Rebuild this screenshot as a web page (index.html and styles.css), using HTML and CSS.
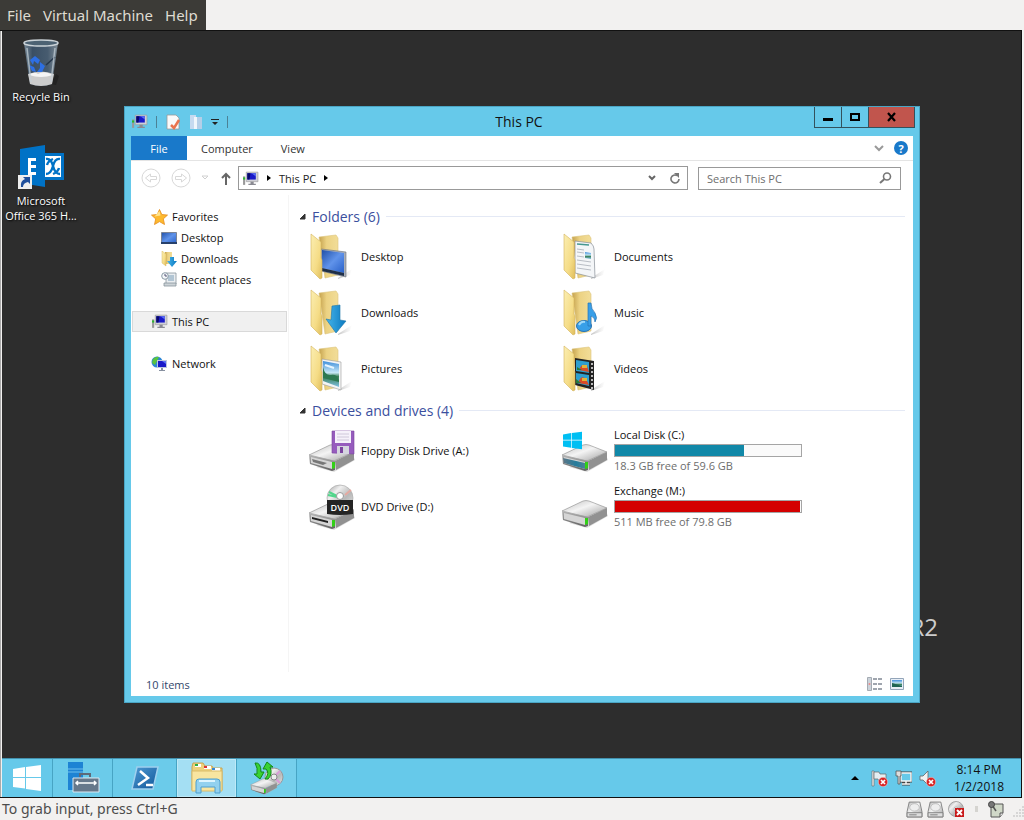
FILE: index.html
```html
<!DOCTYPE html>
<html lang="en">
<head>
<meta charset="utf-8">
<title>Virtual Machine</title>
<link rel="stylesheet" href="styles.css">
</head>
<body>
<svg class="defs" aria-hidden="true">
  <defs>
    <linearGradient id="gFront" x1="0" y1="0" x2="1" y2="1"><stop offset="0" stop-color="#fbeeb2"/><stop offset=".6" stop-color="#f5dc86"/><stop offset="1" stop-color="#dfbd5c"/></linearGradient>
    <linearGradient id="gBack" x1="0" y1="0" x2="1" y2="0"><stop offset="0" stop-color="#c5a24e"/><stop offset=".4" stop-color="#ecd283"/><stop offset="1" stop-color="#f2dd98"/></linearGradient>
    <linearGradient id="gShade"><stop offset="0" stop-color="#888" stop-opacity=".5"/><stop offset="1" stop-color="#aaa" stop-opacity="0"/></linearGradient>
    <linearGradient id="gScreen" x1="0" y1="0" x2="1" y2="1"><stop offset="0" stop-color="#2050a8"/><stop offset=".5" stop-color="#6093ea"/><stop offset="1" stop-color="#2860c8"/></linearGradient>
    <linearGradient id="gArrow" x1="0" x2="1"><stop offset="0" stop-color="#46b5ea"/><stop offset="1" stop-color="#0a78c0"/></linearGradient>
    <linearGradient id="gTop" x1="0" x2="1" y1="0" y2="1"><stop offset="0" stop-color="#bbb"/><stop offset=".45" stop-color="#f4f4f4"/><stop offset="1" stop-color="#9d9d9d"/></linearGradient>
    <linearGradient id="gSide" x1="0" x2="0" y1="0" y2="1"><stop offset="0" stop-color="#b5b5b5"/><stop offset="1" stop-color="#606060"/></linearGradient>
    <linearGradient id="gTeal" x1="0" x2="1"><stop offset="0" stop-color="#5d7686"/><stop offset=".6" stop-color="#247c9c"/><stop offset="1" stop-color="#4d8295"/></linearGradient>
    <linearGradient id="gDisc" x1="0" x2="1" y1="0" y2="1"><stop offset="0" stop-color="#999"/><stop offset=".3" stop-color="#f0f0f0"/><stop offset=".6" stop-color="#b8b8b8"/><stop offset="1" stop-color="#e8e8e8"/></linearGradient>
    <linearGradient id="gShell" x1="0" x2="1" y1="0" y2="1"><stop offset="0" stop-color="#4f9bd4"/><stop offset="1" stop-color="#0f5598"/></linearGradient>
    <linearGradient id="gBin" x1="0" x2="1"><stop offset="0" stop-color="#8195a5"/><stop offset=".25" stop-color="#3c536a"/><stop offset=".7" stop-color="#4a6177"/><stop offset="1" stop-color="#8a98a3"/></linearGradient>
    <linearGradient id="gPic" x1="0" x2="0" y1="0" y2="1"><stop offset="0" stop-color="#3f8edb"/><stop offset=".45" stop-color="#c6e7f5"/><stop offset=".6" stop-color="#397e52"/><stop offset="1" stop-color="#7fc0e4"/></linearGradient>
    <symbol id="pc" viewBox="0 0 16 14"><path d="M1 5h2v8H1z" fill="#999"/><path d="M1 6h2v2H1z" fill="#2eb82e"/><path d="M4 1h11v9H4z" fill="#d0d0d8" stroke="#999" stroke-width=".6"/><path d="M5 2h8v6H5z" fill="#1a1ac8"/><path d="M5 2h3L7 8H5z" fill="#08086a"/><path d="M9 2h4v3z" fill="#5b70f5"/><path d="M8 10h3v2h2v1H6v-1h2z" fill="#8a8a92"/></symbol>
    <symbol id="folder" viewBox="0 0 48 48"><path d="M28 46l14-9-2 6-12 4z" fill="url(#gShade)"/><path d="M9 5l17-2 2 3v37l-13 3z" fill="url(#gBack)" stroke="#dcc47c" stroke-width=".6"/></symbol>
    <symbol id="flap" viewBox="0 0 48 48"><path d="M1 2l10 8v16l1 2v18l-2 1-9-9z" fill="url(#gFront)" stroke="#d3b45c" stroke-width=".6"/></symbol>
    <symbol id="drive" viewBox="0 0 48 30"><path d="M8 25l18 5 21-12-2-5z" fill="#bbb" opacity=".5"/><path d="M1 13L22 3q3-1 6 0l18 7-20 9z" fill="url(#gTop)" stroke="#8a8a8a" stroke-width=".6"/><path d="M1 13l26 6v9l-3 1-22-7z" fill="url(#gSide)"/><path d="M27 19l19-9v8l-18 10z" fill="#919191"/><path d="M3 15l21 5v7L3 21z" fill="#d5d5d5"/><path d="M24 20h3v6l-3 1z" fill="#32cf17"/></symbol>
    <symbol id="badge" viewBox="0 0 10 10"><circle cx="5" cy="5" r="4.700" fill="#d92626" stroke="#fff" stroke-width=".4"/><path d="M3 3l4 4M7 3L3 7" stroke="#fff" stroke-width="1.700"/></symbol>
    <symbol id="disk" viewBox="0 0 16 16"><path d="M3 1h10l2 9v5H1v-5z" fill="url(#gTop)" stroke="#777" stroke-width=".8"/><path d="M1 11h14v4H1z" fill="#ddd" stroke="#777" stroke-width=".8"/><ellipse cx="8" cy="6" rx="4.500" ry="3.500" fill="#eee" stroke="#aaa" stroke-width=".6"/><path d="M3 13h7" stroke="#888"/></symbol>
    <symbol id="winlogo" viewBox="0 0 28 26"><path d="M0 4l12-2v10H0zM13 2l15-2v12H13zM0 13h12v10.500L0 22zM13 13h15v13l-15-2z"/></symbol>
  </defs>
</svg>

<nav class="menubar">
  <div class="menus"><button>File</button><button>Virtual Machine</button><button>Help</button></div>
</nav>

<main class="screen">
  <div class="desktop">
    <div class="shortcuts">
      <a class="shortcut" href="#">
        <svg width="48" height="50" viewBox="0 0 48 50"><path d="M34 46l5-10 3 2-3 9z" fill="#222"/><path d="M7 5h34l-6 41q-11 4-22 0z" fill="url(#gBin)" opacity=".9"/><path d="M11 36q13-5 26 0l-2 10q-11 4-22 0z" fill="#ccc"/><path d="M12 37q5-4 9-1 6-4 15 1-12 4-24 0z" fill="#f5f5f5"/><path d="M13 22l5-4 5 4-2 4-4-3-1 4z M23 24l5 4-3 6h-5l3-4z M12 27l5 2 2 5-4-1z" fill="#2d6fe4"/><path d="M38 19l-9 8" stroke="#24364a" stroke-width="1.500"/><path d="M10 10l4 34M38 10l-4 34" stroke="#c5d0d8" stroke-width="1.500" opacity=".7"/><ellipse cx="24" cy="5" rx="17" ry="3" fill="#4c6273" stroke="#cbd3d8" stroke-width="1.500"/></svg>
        <span>Recycle Bin</span>
      </a>
      <a class="shortcut" href="#">
        <svg width="48" height="50" viewBox="0 0 48 50"><path d="M24 11h23v27H24z" fill="#0072c6"/><path d="M27 14h17v21H27z" fill="#fff"/><path d="M29 17q5-1 7 7 2 8 7 8M43 17q-5-1-7 7-2 8-7 8M30 23q1-4 6-6M42 26q-1 4-6 6" fill="none" stroke="#0072c6" stroke-width="2.400"/><path d="M3 7l25-4v42L3 41z" fill="#0072c6"/><path d="M11 16h8v3h-5v4h5v3h-5v4h5v3h-8z" fill="#fff"/><path d="M1 33h14v14H1z" fill="#eee"/><path d="M4 45q-1-6 4-8l-2-2h7v7l-2-2q-5 1-5 5z" fill="#1f4f9c"/></svg>
        <span>Microsoft<br>Office 365 H...</span>
      </a>
    </div>

    <div class="brand">R2</div>

    <section class="window">
      <header class="titlebar">
        <div class="quick">
          <svg width="17" height="15"><use href="#pc"/></svg>
          <i class="bar"></i>
          <button aria-label="Properties"><svg width="16" height="16" viewBox="0 0 16 16"><path d="M2 1h9l3 3v11H2z" fill="#fafafa" stroke="#999" stroke-width=".8"/><path d="M6 11l3 3 5-8" fill="none" stroke="#ea744e" stroke-width="2.500"/></svg></button>
          <button aria-label="New folder"><svg width="14" height="16" viewBox="0 0 14 16"><path d="M1 1h6v14H1z" fill="#c5daf0"/><path d="M7 3h6v12H7z" fill="#b4cfe8"/><path d="M5 3h3v12H5z" fill="#eff6fc"/></svg></button>
          <button aria-label="Customize"><svg width="8" height="8" viewBox="0 0 8 8"><path d="M0 1h8v1H0zM1 4h6L4 7z" fill="#222"/></svg></button>
          <i class="bar"></i>
        </div>
        <h1>This PC</h1>
        <div class="controls">
          <button aria-label="Minimize"><svg width="12" height="12"><path d="M1 7h10v3H1z"/></svg></button>
          <button aria-label="Maximize"><svg width="12" height="12"><path d="M2 3h8v6H2z" fill="none" stroke="#000" stroke-width="2"/></svg></button>
          <button class="close" aria-label="Close"><svg width="12" height="12"><path d="M2 2l7 8M9 2L2 10" stroke="#000" stroke-width="2.200"/></svg></button>
        </div>
      </header>

      <div class="client">
        <nav class="tabs">
          <button class="file">File</button><button>Computer</button><button>View</button>
          <div class="tabs-end">
            <button aria-label="Expand the ribbon"><svg width="10" height="8"><path d="M1 2l4 4 4-4" fill="none" stroke="#999" stroke-width="2"/></svg></button>
            <button class="help" aria-label="Help">?</button>
          </div>
        </nav>

        <div class="address-row">
          <button aria-label="Back"><svg width="20" height="20" viewBox="0 0 20 20" fill="none" stroke="#d8d8d8"><circle cx="10" cy="10" r="9"/><path d="M4.500 10l5-4v2.500h6v3h-6V14z"/></svg></button>
          <button aria-label="Forward"><svg width="20" height="20" viewBox="0 0 20 20" fill="none" stroke="#d8d8d8"><circle cx="10" cy="10" r="9"/><path d="M15.500 10l-5-4v2.500h-6v3h6V14z"/></svg></button>
          <button aria-label="Recent locations"><svg width="8" height="6"><path d="M1 1h6L4 4z" fill="none" stroke="#d0d0d0"/></svg></button>
          <button class="up" aria-label="Up"><svg width="10" height="13"><path d="M5 13V2M1 6l4-4 4 4" fill="none" stroke="#666" stroke-width="2"/></svg></button>
          <div class="address">
            <svg width="17" height="15"><use href="#pc"/></svg>
            <svg width="4" height="8"><path d="M0 1l4 3-4 3z"/></svg>
            <span>This PC</span>
            <svg width="4" height="8"><path d="M0 1l4 3-4 3z"/></svg>
            <div class="address-end">
              <button aria-label="Previous locations"><svg width="10" height="8"><path d="M2 2l3 3 3-3" fill="none" stroke="#666" stroke-width="2"/></svg></button>
              <button aria-label="Refresh"><svg width="12" height="12"><path d="M8 3.500a4 4 0 1 0 2 3.500" fill="none" stroke="#777" stroke-width="1.600"/><path d="M5 1h5v5z" fill="#777"/></svg></button>
            </div>
          </div>
          <label class="search">
            <input type="text" placeholder="Search This PC" aria-label="Search This PC">
            <svg width="13" height="12"><circle cx="8" cy="4.500" r="3.500" fill="none" stroke="#777" stroke-width="1.600"/><path d="M5.500 7L1 11" stroke="#777" stroke-width="2"/></svg>
          </label>
        </div>

        <div class="body">
          <aside class="sidebar">
            <a href="#"><svg width="17" height="16" viewBox="0 0 17 16"><path d="M8.500 0.500l2.300 5 5.700.6-4.200 3.800 1.200 5.600-5-2.900-5 2.900 1.200-5.600L.5 6.100l5.700-.6z" fill="#fdb92e" stroke="#e58b1c" stroke-width=".8"/><path d="M8.500 2l1 4.500-6 1z" fill="#ffe38c"/></svg>Favorites</a>
            <a class="sub" href="#"><svg width="16" height="14" viewBox="0 0 16 14"><path d="M.5 1.500h15v11H.5z" fill="url(#gScreen)" stroke="#7c8494"/><path d="M0 11h16v2H0z" fill="#27406b"/></svg>Desktop</a>
            <a class="sub" href="#"><svg width="16" height="16" viewBox="0 0 16 16"><path d="M4 1h7v12H4z" fill="url(#gBack)"/><path d="M1 0l4 3v12l-4-3z" fill="url(#gFront)" stroke="#d9bb62" stroke-width=".5"/><path d="M9 6h4v4h3l-5 6-5-6h3z" fill="url(#gArrow)"/></svg>Downloads</a>
            <a class="sub" href="#"><svg width="16" height="15" viewBox="0 0 16 15"><path d="M5 1h10v11H5z" fill="#e9edf0" stroke="#88949c" stroke-width=".8"/><path d="M7 4h6M7 6h6M7 8h6" stroke="#7a9db7"/><path d="M3 11h12v3H3z" fill="#ccd3d7" stroke="#88949c" stroke-width=".8"/><circle cx="4" cy="4" r="3.300" fill="#f5f8fa" stroke="#8a9aa5"/><path d="M4 2v2h2" fill="none" stroke="#557"/></svg>Recent places</a>
            <a class="apart selected" href="#"><svg width="17" height="15"><use href="#pc"/></svg>This PC</a>
            <a class="apart" href="#"><svg width="17" height="16" viewBox="0 0 17 16"><circle cx="6" cy="6" r="5.500" fill="#2c86d6"/><path d="M2 3q3-3 6-2L6 5 4 9 1 7z" fill="#5ac43e"/><path d="M6 4h10v8H6z" fill="#bcc6dc"/><path d="M7 5h8v6H7z" fill="#1919c8"/><path d="M11 5h4v3z" fill="#5b70f5"/><path d="M10 12h2v2h2v1H8v-1h2z" fill="#8790a0"/></svg>Network</a>
          </aside>

          <div class="content">
            <section>
              <h2><svg width="7" height="7"><path d="M6 1v5H1z" fill="#333" stroke="#333"/></svg>Folders (6)</h2>
              <div class="grid">
                <a class="item" href="#"><svg width="48" height="48" viewBox="-2 0 48 48"><use href="#folder" width="48" height="48"/><path d="M11 17l25 3v25l-25-6z" fill="#a9afb8" stroke="#6b7078" stroke-width=".6"/><path d="M12 18l22 3v20l-22-5z" fill="url(#gScreen)"/><path d="M12 36l22 5v3l-22-5z" fill="#1f2f48"/><use href="#flap" width="48" height="48"/></svg><span>Desktop</span></a>
                <a class="item" href="#"><svg width="48" height="48" viewBox="-2 0 48 48"><use href="#folder" width="48" height="48"/><path d="M12 9l16 2q3 3 3 6l1 29-20-5z" fill="#f4f6f8" stroke="#868e96" stroke-width=".7"/><path d="M14 12l12 1" stroke="#479890" stroke-width="1.500"/><path d="M14 17l7 1M14 20l7 1M14 24l7 1M14 28l14 2M14 32l14 2M14 36l14 2" stroke="#b9bec5"/><path d="M22 20l6 1v6l-6-1z" fill="url(#gPic)"/><use href="#flap" width="48" height="48"/></svg><span>Documents</span></a>
                <a class="item" href="#"><svg width="48" height="48" viewBox="-2 0 48 48"><use href="#folder" width="48" height="48"/><path d="M22 18l8-1v15l6 1-10 12-10-14 5 1z" fill="url(#gArrow)" stroke="#1d76aa" stroke-width=".6"/><use href="#flap" width="48" height="48"/></svg><span>Downloads</span></a>
                <a class="item" href="#"><svg width="48" height="48" viewBox="-2 0 48 48"><use href="#folder" width="48" height="48"/><ellipse cx="21" cy="38" rx="7.500" ry="5.500" fill="#389fe8" stroke="#2773b4"/><path d="M25 15h3q0 6 4 10 3 5 0 9 0-5-4-6v10h-3z" fill="#389fe8" stroke="#2773b4" stroke-width=".7"/><path d="M16 37q2-4 6-3" fill="none" stroke="#9cd8fb" stroke-width="2"/><use href="#flap" width="48" height="48"/></svg><span>Music</span></a>
                <a class="item" href="#"><svg width="48" height="48" viewBox="-2 0 48 48"><use href="#folder" width="48" height="48"/><path d="M12 15l19 3v28l-19-6z" fill="#f4f4f4" stroke="#9a9a9a" stroke-width=".6"/><path d="M13 17l16 3v23l-16-6z" fill="url(#gPic)"/><path d="M13 23q2 9 8 8t8 5v2l-16-4z" fill="#2d7950"/><path d="M15 21l9 3" stroke="#e8f6ff" stroke-width="2"/><use href="#flap" width="48" height="48"/></svg><span>Pictures</span></a>
                <a class="item" href="#"><svg width="48" height="48" viewBox="-2 0 48 48"><use href="#folder" width="48" height="48"/><path d="M12 14l19 3v29l-19-5z" fill="#222"/><path d="M13 16l13 2v11l-13-2zM13 29l13 2v11l-13-3z" fill="#2e9fcf"/><path d="M16 26q3-8 8-4l2 6zM15 39q3-9 8-4l3 6z" fill="#d94b27"/><path d="M19 21h5v3h-5zM19 34h5v3h-5z" fill="#e3b338"/><path d="M14 23l5 3h-5zM13 35l5 4h-5z" fill="#267a3a"/><path d="M29 19v26" stroke="#eee" stroke-width="1.500" stroke-dasharray="2 2"/><use href="#flap" width="48" height="48"/></svg><span>Videos</span></a>
              </div>
            </section>
            <section>
              <h2><svg width="7" height="7"><path d="M6 1v5H1z" fill="#333" stroke="#333"/></svg>Devices and drives (4)</h2>
              <div class="grid">
                <a class="item" href="#"><svg width="48" height="48" viewBox="0 -1 48 48"><use href="#drive" y="15" width="48" height="30"/><path d="M4 32l15 4-4 2-10-3z" fill="#777"/><path d="M24 4h22v23l-22-1z" fill="#965cbd" stroke="#7a449f" stroke-width=".6"/><path d="M27 4h16v12H27z" fill="#f5f1fa"/><path d="M29 7h12M29 10h12M29 13h12" stroke="#cfc8da"/><path d="M29 19h12v8H29z" fill="#d5d5df"/><path d="M32 20h3v6h-3z" fill="#7b459f"/></svg><span>Floppy Disk Drive (A:)</span></a>
                <a class="item" href="#">
                  <svg width="48" height="48" viewBox="0 -2 48 48"><use href="#drive" y="14" width="48" height="30"/><path d="M2 30l22 5v6L3 35z" fill="url(#gTeal)"/><use href="#winlogo" x="2" y="3" width="19" height="19" fill="#00bff3"/></svg>
                  <span class="disk">
                    <label for="disk-c">Local Disk (C:)</label>
                    <meter id="disk-c" min="0" max="59.6" value="41.3"></meter>
                    <small>18.3 GB free of 59.6 GB</small>
                  </span>
                </a>
                <a class="item" href="#"><svg width="48" height="48" viewBox="0 -1 48 48"><use href="#drive" y="17" width="48" height="30"/><path d="M4 34l16 4v2L4 36z" fill="#222"/><circle cx="32" cy="15" r="13" fill="url(#gDisc)" stroke="#aaa" stroke-width=".7"/><path d="M20 12l9 2M21 9l8 4" stroke="#51d68b" stroke-width="2"/><path d="M37 12l6-5" stroke="#e5a9a0" stroke-width="2"/><circle cx="32" cy="13" r="3.500" fill="#fff" stroke="#999"/><path d="M19 17h26v14q-13 2-26 0z" fill="#242424"/><text x="32" y="28" class="dvd">DVD</text></svg><span>DVD Drive (D:)</span></a>
                <a class="item" href="#">
                  <svg width="48" height="48" viewBox="0 -2 48 48"><use href="#drive" y="14" width="48" height="30"/></svg>
                  <span class="disk">
                    <label for="disk-m">Exchange (M:)</label>
                    <meter id="disk-m" class="full" min="0" max="79.8" value="79.3"></meter>
                    <small>511 MB free of 79.8 GB</small>
                  </span>
                </a>
              </div>
            </section>
          </div>
        </div>

        <footer class="window-status">
          <span>10 items</span>
          <div class="views">
            <button aria-label="Details view"><svg width="16" height="14" viewBox="0 0 16 14"><path d="M.5.5h4v13h-4z" fill="#ccd3da" stroke="#a4abb3"/><circle cx="2.500" cy="7" r="1" fill="#e88"/><path d="M6 2h4M11 2h4M6 7h4M11 7h4M6 12h4M11 12h4" stroke="#808894" stroke-width="1.500"/></svg></button>
            <button aria-label="Tiles view"><svg width="14" height="12" viewBox="0 0 14 12"><path d="M.5.5h13v11H.5z" fill="#e8eff7" stroke="#93a5b9"/><path d="M2 2h10v7H2z" fill="url(#gPic)"/><path d="M2 5l10 3v1H2z" fill="#1f6554"/></svg></button>
          </div>
        </footer>
      </div>
    </section>
  </div>

  <div class="taskbar">
    <button class="task start" aria-label="Start"><svg width="28" height="26" fill="#fff"><use href="#winlogo"/></svg></button>
    <button class="task pinned" aria-label="Server Manager"><svg width="34" height="34" viewBox="0 0 34 34"><path d="M2 1h15v28H2z" fill="#1d83d4"/><path d="M2 8h15M2 11h15" stroke="#6ec0ee"/><path d="M14 16v-3h10v3" fill="none" stroke="#5d6a79" stroke-width="2"/><path d="M7 17h26v14H7z" fill="#66788b" stroke="#dce8f1"/><path d="M10 22h20M12 20l-2 2 2 2M28 20l2 2-2 2" fill="none" stroke="#fff" stroke-width="1.500"/></svg></button>
    <button class="task shell" aria-label="PowerShell"><svg width="30" height="26" viewBox="0 0 30 26"><path d="M7 2h21l-5 22H2z" fill="url(#gShell)" stroke="#9fd0ee" stroke-width="1.500"/><path d="M10 6l8 7-10 7M16 20h7" fill="none" stroke="#fff" stroke-width="2.500"/></svg></button>
    <button class="task active" aria-label="File Explorer"><svg width="34" height="32" viewBox="0 0 34 32"><path d="M2 5l1-4h10l2 3h7l1 2h9v22H2z" fill="#eed17c" stroke="#c7a453"/><path d="M5 2h6v3H5zM14 4h7v3h-7zM22 6h8v3h-8z" fill="#fff"/><path d="M5 2h3v2H5z" fill="#2eaf43"/><path d="M14 4h3v2h-3z" fill="#d33"/><path d="M22 6h3v2h-3z" fill="#3587d8"/><path d="M2 9h30v20H2z" fill="#f8e5a0" stroke="#d9bb69"/><path d="M6 20q0-3 3-3h18q3 0 3 3v11h-5v-6H11v6H6z" fill="#92d1ef" stroke="#4e9fce"/><path d="M9 19h16" stroke="#ddf5ff" stroke-width="2"/></svg></button>
    <button class="task open" aria-label="Disc image tool"><svg width="34" height="34" viewBox="0 0 34 34"><circle cx="24" cy="16" r="9" fill="url(#gDisc)" stroke="#999"/><path d="M24 16l6-6M24 16l6 6" stroke="#d99bd6" stroke-width="2"/><circle cx="24" cy="16" r="3" fill="#eee" stroke="#888"/><use href="#drive" x="0" y="16" width="28" height="18"/><path d="M5 2q6-1 6 9h3l-4 7-6-5h3q1-6-2-11z" fill="#38d232" stroke="#138816"/><path d="M15 18q5-6 1-10h-3l4-7 6 5h-3q3 7-2 12z" fill="#38d232" stroke="#138816"/></svg></button>
    <div class="tray">
      <button aria-label="Show hidden icons"><svg width="8" height="4"><path d="M0 4l4-4 4 4z"/></svg></button>
      <svg width="17" height="17" viewBox="0 0 17 17"><path d="M1 1h2v15H1z" fill="#eee" stroke="#666" stroke-width=".6"/><path d="M3 2h5l1 2h6v7H8L7 9H3z" fill="#e4eef2" stroke="#666" stroke-width=".7"/><use href="#badge" x="7" y="7" width="10" height="10"/></svg>
      <svg width="17" height="16" viewBox="0 0 17 16"><path d="M6 3h10v8H6zM11 11v3M7 14h8" fill="none" stroke="#444" stroke-width="2.800"/><path d="M6 3h10v8H6z" fill="#66c9e9" stroke="#f5f5f5" stroke-width="1.500"/><path d="M11 11v3M7 14h8" stroke="#f5f5f5" stroke-width="1.500"/><path d="M1 1h5v5H5v8H3V6H1z" fill="#ddd" stroke="#555" stroke-width=".8"/></svg>
      <svg width="17" height="17" viewBox="0 0 17 17"><path d="M1 6h3l5-5v14l-5-5H1z" fill="#f2f2f2" stroke="#666" stroke-width=".8"/><use href="#badge" x="7" y="7" width="10" height="10"/></svg>
      <time>8:14 PM<br>1/2/2018</time>
    </div>
  </div>
</main>

<footer class="statusbar">
  <span>To grab input, press Ctrl+G</span>
  <div class="devices">
    <svg width="17" height="17"><use href="#disk"/></svg>
    <svg width="17" height="17"><use href="#disk"/></svg>
    <svg width="17" height="17" viewBox="0 0 17 17"><circle cx="8" cy="8" r="7.500" fill="url(#gDisc)" stroke="#888" stroke-width=".7"/><circle cx="8" cy="8" r="2" fill="#fff" stroke="#999" stroke-width=".6"/><path d="M7 7h9v9H7z" fill="#c91919"/><path d="M9 9l5 5M14 9l-5 5" stroke="#fff" stroke-width="2"/></svg>
    <i class="divider"></i>
    <svg width="16" height="17" viewBox="0 0 16 17"><path d="M3 3h12v9l-3 4H3z" fill="#d0d8c8" stroke="#555"/><path d="M15 12h-3v4" fill="#eee" stroke="#555"/><path d="M4 4l4 6" stroke="#555" stroke-width="1.500"/><circle cx="3.500" cy="3.500" r="3" fill="#777" stroke="#444"/></svg>
    <svg class="grip" width="12" height="12"><path d="M10 1h2M7 4h2M10 4h2M4 7h2M7 7h2M10 7h2M1 10h2M4 10h2M7 10h2M10 10h2" stroke="#bbb"/></svg>
  </div>
</footer>
</body>
</html>
```
FILE: styles.css
```css
* { box-sizing: border-box; }

body {
  display: flex;
  flex-direction: column;
  min-height: 100vh;
  margin: 0;
  background: #f2f1f0;
  font: 11px/15px "Open Sans", "Noto Sans", sans-serif;
  color: #111;
}

a { color: inherit; text-decoration: none; }
svg { display: block; flex: none; }
.defs { position: absolute; width: 0; height: 0; }

button {
  display: flex;
  align-items: center;
  justify-content: center;
  padding: 0;
  border: 0;
  background: none;
  color: inherit;
  font: inherit;
}

/* Viewer menu */
.menubar { display: flex; }
.menus {
  display: flex;
  gap: 12px;
  height: 30px;
  padding: 0 8px 0 7px;
  background: #3c3b37;
  color: #dfdbd2;
  font: 15px/20px "Noto Sans", sans-serif;
}

/* Guest display */
.screen {
  display: flex;
  flex: 1;
  flex-direction: column;
  margin-right: 2px;
  border: 1px solid #111;
  border-width: 1px 1px 1px 0;
  box-shadow: inset 1px 0 #aaa;
  padding-left: 2px;
}
.desktop {
  position: relative;
  flex: 1;
  background: #2d2d2d;
}
.shortcuts {
  display: flex;
  flex-direction: column;
  gap: 38px;
  width: 78px;
  padding-top: 7px;
}
.shortcut {
  display: flex;
  flex-direction: column;
  align-items: center;
  gap: 1px;
  color: #fff;
  text-align: center;
  text-shadow: 1px 1px 2px #000;
}
.brand {
  position: absolute;
  right: 83px;
  bottom: 114px;
  color: #ccc;
  font-size: 24px;
  line-height: 34px;
}

/* Explorer window */
.window {
  position: absolute;
  top: 75px;
  right: 101px;
  bottom: 55px;
  left: 122px;
  display: flex;
  flex-direction: column;
  padding: 0 6px 6px;
  border: 1px solid #4aa5c4;
  background: #66c9ea;
}
.titlebar {
  display: grid;
  grid-template-columns: 1fr auto 1fr;
  align-items: center;
  height: 29px;
  padding-right: 6px;
}
.titlebar h1 {
  margin: 0;
  font-size: 14px;
  font-weight: 400;
  line-height: 20px;
}
.quick { display: flex; align-items: center; gap: 8px; }
.bar { width: 1px; height: 12px; background: #4c8296; }
.controls {
  display: flex;
  align-self: start;
  justify-self: end;
  margin-right: -8px;
  border: 1px solid #33515c;
  border-top: 0;
}
.controls button { width: 27px; height: 20px; border-right: 1px solid #33515c; }
.controls .close { width: 45px; border: 0; background: #c1554d; }

.client {
  display: flex;
  flex: 1;
  flex-direction: column;
  background: #fff;
}
.tabs {
  display: flex;
  height: 25px;
  border-bottom: 1px solid #e4e4e4;
  color: #333;
}
.tabs > button { padding: 0 14px; }
.tabs > .file { width: 56px; background: #1979ca; color: #fff; }
.tabs-end {
  display: flex;
  align-items: center;
  gap: 10px;
  margin-left: auto;
  padding-right: 5px;
}
.help {
  width: 14px;
  height: 14px;
  border-radius: 7px;
  background: #1979ca;
  color: #fff;
  font-weight: 700;
}

.address-row {
  display: flex;
  align-items: center;
  gap: 10px;
  height: 34px;
  padding: 0 12px 0 10px;
}
.up { margin: 0 -3px 0 2px; }
.address {
  display: flex;
  flex: 1;
  align-items: center;
  gap: 8px;
  height: 24px;
  padding: 0 6px 0 3px;
  border: 1px solid #999;
  color: #222;
}
.address-end { display: flex; gap: 12px; margin-left: auto; }
.search {
  display: flex;
  align-items: center;
  width: 203px;
  height: 23px;
  padding: 0 8px;
  border: 1px solid #999;
}
.search input {
  flex: 1;
  min-width: 0;
  padding: 0;
  border: 0;
  outline: 0;
  background: none;
  font: inherit;
}
.search input::placeholder { color: #6d6d6d; }

.body { display: flex; flex: 1; }
.sidebar {
  width: 158px;
  padding: 11px 1px 0;
  border-right: 1px solid #f5f5f5;
}
.sidebar a {
  display: flex;
  align-items: center;
  gap: 4px;
  height: 21px;
  padding-left: 18px;
  border: 1px solid transparent;
}
.sidebar .sub { padding-left: 28px; }
.sidebar .apart { margin-top: 21px; }
.sidebar .selected { border-color: #d9d9d9; background: #f0f0f0; }

.content { flex: 1; padding: 11px 8px 0 10px; }
.content h2 {
  display: flex;
  align-items: center;
  gap: 6px;
  height: 20px;
  margin: 0;
  color: #3b4f9e;
  font-size: 14px;
  font-weight: 400;
}
.content h2::after { flex: 1; height: 1px; background: #e4e9f5; content: ""; }
.grid {
  display: grid;
  grid-template-columns: 253px 253px;
  grid-auto-rows: 56px;
  padding: 2px 0 4px 9px;
}
.item { display: flex; align-items: center; gap: 5px; }
.disk { display: flex; flex-direction: column; }
.disk small { color: #6d6d6d; font-size: 11px; }
meter {
  display: block;
  width: 188px;
  height: 13px;
  margin: 2px 0 1px;
  border: 1px solid #a5a5a5;
  background: #fafafa;
  appearance: none;
}
meter::-webkit-meter-inner-element { display: block; position: static; height: 11px; }
meter::-webkit-meter-bar {
  position: static;
  height: 11px;
  margin: 0;
  border: 0;
  border-radius: 0;
  background: #fafafa;
}
meter::-webkit-meter-optimum-value {
  position: static;
  height: 11px;
  margin: 0;
  background: #1188a8;
}
.full::-webkit-meter-optimum-value { background: #d40000; }
.dvd { fill: #fff; font-size: 9px; font-weight: 600; text-anchor: middle; }

.window-status {
  display: flex;
  align-items: center;
  justify-content: space-between;
  height: 24px;
  padding: 0 9px 0 15px;
  color: #33476b;
}
.views { display: flex; align-items: center; gap: 7px; }

/* Taskbar */
.taskbar { display: flex; height: 39px; border-top: 1px solid #4391ae; background: #66c9ea; }
.task { width: 60px; border-right: 1px solid #47a4c4; background: #75cfec; }
.start { width: 51px; background: none; }
.pinned, .shell { background: #6bcbea; }
.shell { width: 64px; }
.active { background: #a4dff3; box-shadow: inset 0 0 0 1px #bde9f7; }
.tray {
  display: flex;
  align-items: center;
  gap: 7px;
  margin-left: auto;
  padding-right: 17px;
}
.tray > button { margin-right: 5px; }
time { margin-left: 11px; font-size: 12px; line-height: 17px; text-align: center; }

/* Viewer status */
.statusbar {
  display: flex;
  align-items: center;
  justify-content: space-between;
  height: 22px;
  padding-left: 2px;
  color: #4c4c4c;
  font: 14px/20px "Noto Sans", sans-serif;
}
.devices { display: flex; align-items: center; gap: 4px; }
.divider { width: 3px; height: 6px; margin: 0 6px; background: #d5d4d0; }
.grip { align-self: end; margin-left: 4px; }
```
